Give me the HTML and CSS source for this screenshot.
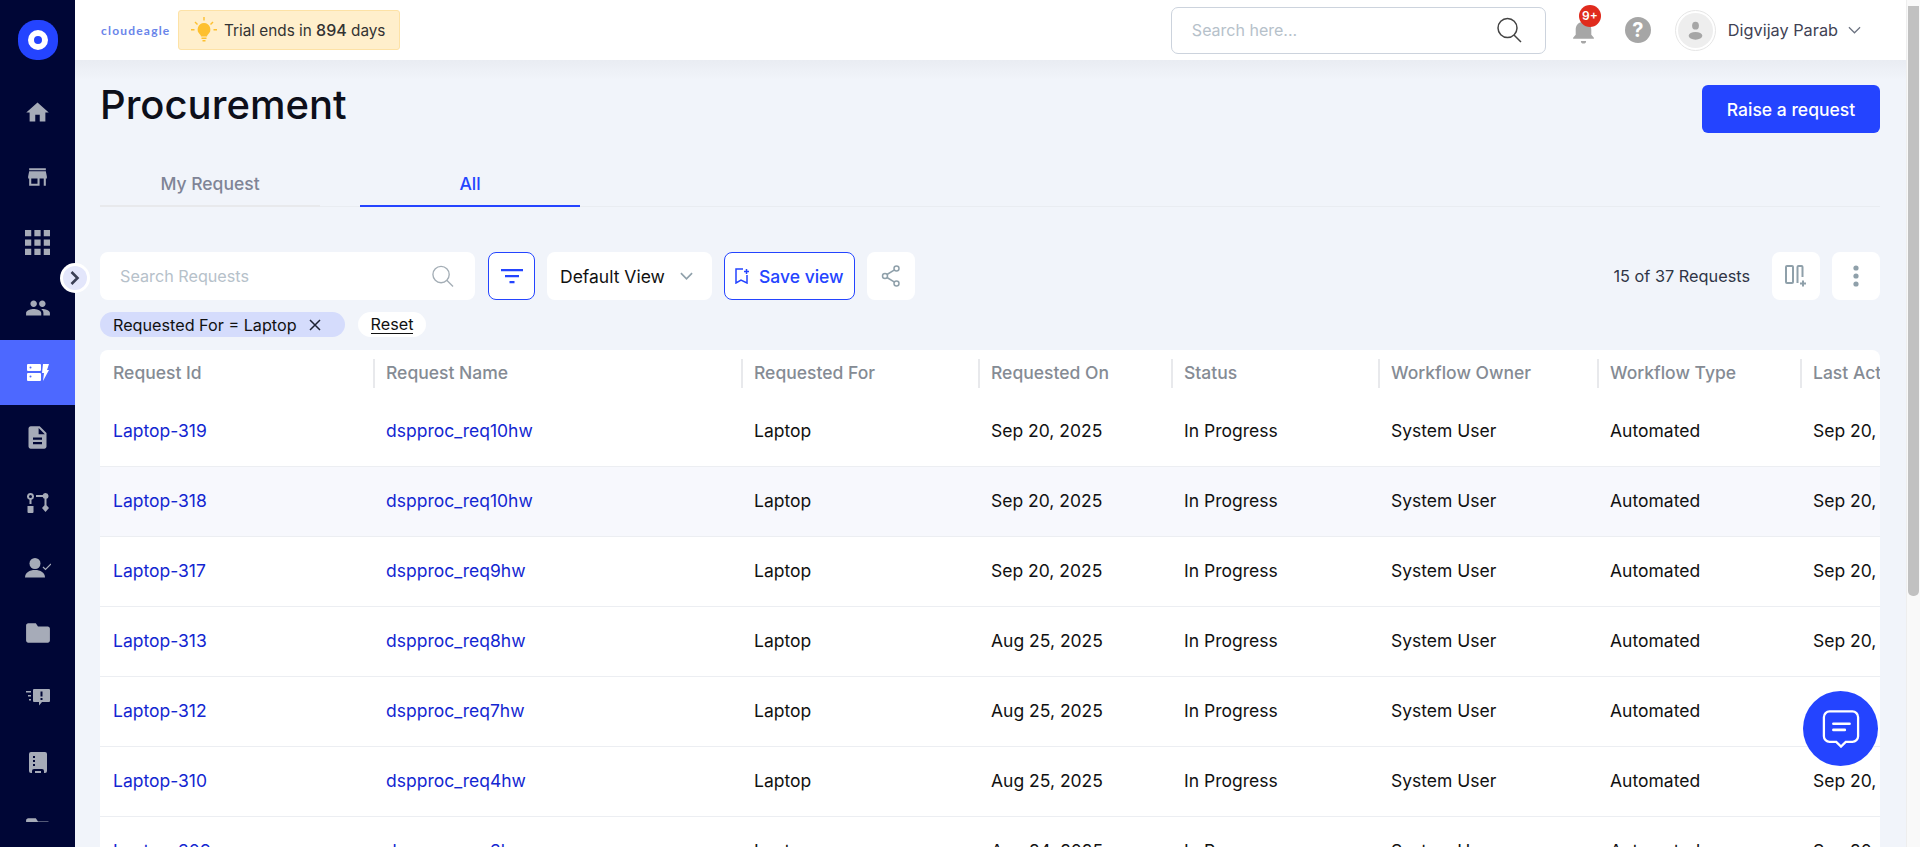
FILE: index.html
```html
<!DOCTYPE html>
<html>
<head>
<title>Procurement</title>
<meta charset="utf-8">
<link rel="stylesheet" href="styles.css">
</head>

<body>
<aside class="sidebar">
  <div class="brand"><span class="brand-dot"></span></div>
  <nav class="nav">
    <a class="nav-item"><svg viewBox="0 0 24 24" width="27" height="27"><path d="M10 20v-6h4v6h5v-8h3L12 3 2 12h3v8z"/></svg></a>
    <a class="nav-item"><svg viewBox="0 0 24 24" width="25" height="25"><path d="M20 3H4v2h16V3zm1 10v-2l-1-5H4l-1 5v2h1v7h10v-7h4v7h2v-7h1zm-9 5H6v-5h6v5z"/></svg></a>
    <a class="nav-item"><svg viewBox="0 0 24 24" width="25" height="25"><path d="M0 0h6v6H0zM9 0h6v6H9zM18 0h6v6h-6zM0 9h6v6H0zM9 9h6v6H9zM18 9h6v6h-6zM0 18h6v6H0zM9 18h6v6H9zM18 18h6v6h-6z"/></svg></a>
    <a class="nav-item"><svg viewBox="0 0 24 24" width="26" height="26"><path d="M16 11c1.660 0 2.990-1.340 2.990-3S17.660 5 16 5c-1.660 0-3 1.340-3 3s1.340 3 3 3zm-8 0c1.660 0 2.990-1.340 2.990-3S9.660 5 8 5C6.340 5 5 6.340 5 8s1.340 3 3 3zm0 2c-2.330 0-7 1.170-7 3.500V19h14v-2.500c0-2.330-4.670-3.500-7-3.500zm8 0c-.29 0-.62.02-.97.05 1.160.84 1.970 1.970 1.970 3.450V19h6v-2.500c0-2.330-4.670-3.500-7-3.500z"/></svg></a>
    <a class="nav-item active"><svg viewBox="0 0 22 17" width="22" height="17"><path fill-rule="evenodd" d="M1 0h12a1 1 0 0 1 1 1v5a1 1 0 0 1-1 1H1a1 1 0 0 1-1-1V1a1 1 0 0 1 1-1zm2.500 2.500a1 1 0 1 0 0 2 1 1 0 0 0 0-2zM1 9h12a1 1 0 0 1 1 1v6a1 1 0 0 1-1 1H1a1 1 0 0 1-1-1v-6a1 1 0 0 1 1-1zm2.500 2.500a1 1 0 1 0 0 2 1 1 0 0 0 0-2z"/><path d="M16 0h6l-2 6h2l-6 11 1-8h-2z"/></svg></a>
    <a class="nav-item"><svg viewBox="0 0 24 24" width="27" height="27"><path d="M14 2H6c-1.100 0-2 .9-2 2v16c0 1.100.9 2 2 2h12c1.100 0 2-.9 2-2V8l-6-6zm2 16H8v-2h8v2zm0-4H8v-2h8v2zm-3-5V3.500L18.500 9H13z"/></svg></a>
    <a class="nav-item"><svg viewBox="0 0 22 20" width="22" height="20"><path d="M3.500 0a3.500 3.500 0 0 1 1 6.850V11h-2V6.850A3.500 3.500 0 0 1 3.500 0zm0 2a1.500 1.500 0 1 0 0 3 1.500 1.500 0 0 0 0-3zM.5 13h6v6a1 1 0 0 1-1 1h-4a1 1 0 0 1-1-1zM18.500 0a3 3 0 1 1-2.800 4H9V2h6.700a3 3 0 0 1 2.800-2zM17.500 6h2v6.200l2.500 2.800-3.500 4-3.500-4 2.500-2.800z"/></svg></a>
    <a class="nav-item"><svg viewBox="0 0 26 20" width="26" height="20"><circle cx="10" cy="5.500" r="5.500"/><path d="M0 19.500c0-5 4.500-7.500 10-7.500s10 2.500 10 7.500z"/><path class="nav-line" d="M18 9l2.500 2.500L26 6"/></svg></a>
    <a class="nav-item"><svg viewBox="0 0 24 24" width="26" height="26"><path d="M10 3H3c-1.100 0-2 .9-2 2v14c0 1.100.9 2 2 2h18c1.100 0 2-.9 2-2V8c0-1.100-.9-2-2-2H12l-2-3z"/></svg></a>
    <a class="nav-item"><svg viewBox="0 0 24 17" width="24" height="17"><path fill-rule="evenodd" d="M8 0h15a1 1 0 0 1 1 1v11a1 1 0 0 1-1 1h-7l-3 3.500V13H8a1 1 0 0 1-1-1V1a1 1 0 0 1 1-1zm6.500 2.500v5h2v-5zm0 6.500v2h2V9z"/><path d="M0 2h5v1.500H0zM2 6h3v1.500H2zM3 10h2v1.500H3z"/></svg></a>
    <a class="nav-item"><svg viewBox="0 0 18 21" width="18" height="21"><path fill-rule="evenodd" d="M2 0h14a2 2 0 0 1 2 2v17a2 2 0 0 1-2 2h-1v-2a2 2 0 0 0-2-2H5a2 2 0 0 0-2 2v2H2a2 2 0 0 1-2-2V2a2 2 0 0 1 2-2zm2 4v2h2V4zm0 4v2h2V8zm0 4v2h2v-2zM6 19h6v2H6z"/></svg></a>
    <a class="nav-item"><svg viewBox="0 0 24 24" width="26" height="26"><path d="M10 3H3c-1.100 0-2 .9-2 2v14c0 1.100.9 2 2 2h18c1.100 0 2-.9 2-2V8c0-1.100-.9-2-2-2H12l-2-3z"/></svg></a>
  </nav>
</aside>

<button class="expand-btn"><span class="expand-inner"><svg viewBox="0 0 12 16" width="12" height="16"><path d="M2.500 2l6 6-6 6" fill="none" stroke="#3a3f55" stroke-width="2.600"/></svg></span></button>

<div class="main">
  <header class="topbar">
    <span class="logo">cloudeagle</span>
    <div class="trial">
      <svg viewBox="0 0 26 26" width="26" height="26"><path d="M13 6a6.500 6.500 0 0 1 4 11.500c-.7.600-1 1.200-1 2H10c0-.8-.3-1.400-1-2A6.500 6.500 0 0 1 13 6zM10.500 20.500h5v1.500h-5zM11.500 23h3v1.500h-3zM12.300 0h1.400v3.500h-1.400zM0 12h3.500v1.400H0zM22.500 12H26v1.400h-3.500zM4.500 4.500l2.500 2.500-1 1-2.500-2.500zM21.500 4.500l1 1-2.500 2.500-1-1z" fill="#fdc02f"/></svg>
      <span>Trial ends in <b>894</b> days</span>
    </div>
    <div class="top-search">
      <span class="top-search-text">Search here...</span>
      <svg viewBox="0 0 26 26" width="26" height="26"><circle cx="11.500" cy="11" r="9.500" fill="none" stroke="#444" stroke-width="1.500"/><path d="M18 18l7 7" stroke="#444" stroke-width="1.500"/></svg>
    </div>
    <div class="bell">
      <svg viewBox="0 0 24 26" width="25" height="27"><path d="M12 2a2 2 0 0 1 2 2v.7c3.500.9 5.500 3.800 5.500 7.300v5l2.500 3v1H2v-1l2.500-3v-5c0-3.500 2-6.400 5.500-7.300V4a2 2 0 0 1 2-2zM9.500 23h5a2.500 2.500 0 0 1-5 0z" fill="#a6a6a6"/></svg>
      <span class="badge">9+</span>
    </div>
    <span class="help">?</span>
    <span class="avatar"><svg viewBox="0 0 36 36" width="35" height="35"><circle cx="18" cy="18" r="18" fill="#eeeeee"/><ellipse cx="18" cy="13" rx="3.500" ry="4" fill="#a6a6a6"/><ellipse cx="18" cy="23.500" rx="7" ry="4" fill="#a6a6a6"/></svg></span>
    <span class="user-name">Digvijay Parab</span>
    <svg class="user-chev" viewBox="0 0 14 8" width="13" height="8"><path d="M1 1l6 6 6-6" fill="none" stroke="#6b7280" stroke-width="1.300"/></svg>
  </header>

  <div class="content">
    <div class="title-row">
      <h1>Procurement</h1>
      <button class="raise-btn">Raise a request</button>
    </div>

    <div class="tabs">
      <div class="tab">My Request</div>
      <div class="tab selected">All</div>
    </div>

    <div class="toolbar">
      <div class="req-search">
        <span>Search Requests</span>
        <svg viewBox="0 0 24 24" width="23" height="23"><circle cx="10.500" cy="10" r="8.500" fill="none" stroke="#a3adb5" stroke-width="1.400"/><path d="M16.500 16l6.500 6.500" stroke="#a3adb5" stroke-width="1.400"/></svg>
      </div>
      <button class="tool-btn outlined"><svg viewBox="0 0 22 16" width="22" height="16"><path d="M0 1h22v2.200H0zM4 7h14v2.200H4zM8.500 13h5v2.200h-5z" fill="#2444ff"/></svg></button>
      <div class="view-select">
        <span>Default View</span>
        <svg viewBox="0 0 14 8" width="13" height="8"><path d="M1 1l6 6 6-6" fill="none" stroke="#8fa0aa" stroke-width="1.800"/></svg>
      </div>
      <button class="save-btn">
        <svg viewBox="0 0 14 16" width="14" height="16"><path d="M8 1H1v14l5-3 6 3V7M9 3.500h5M11.500 1v5" fill="none" stroke="#2444ff" stroke-width="1.500"/></svg>
        Save view
      </button>
      <button class="tool-btn"><svg viewBox="0 0 20 22" width="20" height="22"><g fill="none" stroke="#8fa0aa" stroke-width="1.500"><circle cx="15.500" cy="3.500" r="2.500"/><circle cx="4" cy="11" r="2.500"/><circle cx="15.500" cy="18.500" r="2.500"/><path d="M6 9.500l7.500-4.700M6 12.500l7.500 4.700"/></g></svg></button>
      <span class="count">15 of 37 Requests</span>
      <button class="tool-btn"><svg viewBox="0 0 22 22" width="22" height="22"><g fill="none" stroke="#8fa0aa" stroke-width="2"><rect x="1" y="1" width="7" height="17" rx="1"/><path d="M12.500 18V2a1 1 0 0 1 1-1h3a1 1 0 0 1 1 1v10"/><path d="M15 18.500h6M18 15.500v6"/></g></svg></button>
      <button class="tool-btn"><svg viewBox="0 0 6 22" width="6" height="22"><circle cx="3" cy="3" r="2.600" fill="#8fa0aa"/><circle cx="3" cy="11" r="2.600" fill="#8fa0aa"/><circle cx="3" cy="19" r="2.600" fill="#8fa0aa"/></svg></button>
    </div>

    <div class="chips">
      <div class="chip">Requested For = Laptop <svg viewBox="0 0 12 12" width="12" height="12"><path d="M1 1l10 10M11 1L1 11" stroke="#1d2233" stroke-width="1.500"/></svg></div>
      <div class="reset"><span>Reset</span></div>
    </div>

    <div class="table-wrap">
      <table class="req-table">
        <colgroup>
          <col class="c-id"><col class="c-name"><col class="c-for"><col class="c-on">
          <col class="c-status"><col class="c-owner"><col class="c-type"><col class="c-last">
        </colgroup>
        <thead>
          <tr>
            <th><span>Request Id</span></th>
            <th><span>Request Name</span></th>
            <th><span>Requested For</span></th>
            <th><span>Requested On</span></th>
            <th><span>Status</span></th>
            <th><span>Workflow Owner</span></th>
            <th><span>Workflow Type</span></th>
            <th><span>Last Activity</span></th>
          </tr>
        </thead>
        <tbody>
          <tr>
            <td><a>Laptop-319</a></td><td><a>dspproc_req10hw</a></td><td>Laptop</td><td>Sep 20, 2025</td>
            <td>In Progress</td><td>System User</td><td>Automated</td><td>Sep 20, 2025</td>
          </tr>
          <tr class="hovered">
            <td><a>Laptop-318</a></td><td><a>dspproc_req10hw</a></td><td>Laptop</td><td>Sep 20, 2025</td>
            <td>In Progress</td><td>System User</td><td>Automated</td><td>Sep 20, 2025</td>
          </tr>
          <tr>
            <td><a>Laptop-317</a></td><td><a>dspproc_req9hw</a></td><td>Laptop</td><td>Sep 20, 2025</td>
            <td>In Progress</td><td>System User</td><td>Automated</td><td>Sep 20, 2025</td>
          </tr>
          <tr>
            <td><a>Laptop-313</a></td><td><a>dspproc_req8hw</a></td><td>Laptop</td><td>Aug 25, 2025</td>
            <td>In Progress</td><td>System User</td><td>Automated</td><td>Sep 20, 2025</td>
          </tr>
          <tr>
            <td><a>Laptop-312</a></td><td><a>dspproc_req7hw</a></td><td>Laptop</td><td>Aug 25, 2025</td>
            <td>In Progress</td><td>System User</td><td>Automated</td><td>Sep 20, 2025</td>
          </tr>
          <tr>
            <td><a>Laptop-310</a></td><td><a>dspproc_req4hw</a></td><td>Laptop</td><td>Aug 25, 2025</td>
            <td>In Progress</td><td>System User</td><td>Automated</td><td>Sep 20, 2025</td>
          </tr>
          <tr>
            <td><a>Laptop-309</a></td><td><a>dspproc_req3hw</a></td><td>Laptop</td><td>Aug 24, 2025</td>
            <td>In Progress</td><td>System User</td><td>Automated</td><td>Sep 20, 2025</td>
          </tr>
        </tbody>
      </table>
    </div>
  </div>
</div>

<div class="scroll-track"><div class="scroll-thumb"></div></div>

<button class="chat-btn"><svg viewBox="0 0 40 40" width="38" height="38"><path d="M8 1.500h24a6 6 0 0 1 6 6v20a6 6 0 0 1-6 6h-7l-5 5-5-5H8a6 6 0 0 1-6-6v-20a6 6 0 0 1 6-6z" fill="none" stroke="#fff" stroke-width="2.400"/><path d="M12 14.500h17M12 21h12" stroke="#fff" stroke-width="2.800" stroke-linecap="round"/></svg></button>
</body>
</html>
```

FILE: styles.css
```css
* {
  box-sizing: border-box;
}

html, body {
  height: 100%;
}

body {
  margin: 0;
  display: flex;
  overflow: hidden;
  font-family: Inter, "Liberation Sans", sans-serif;
  font-size: 16px;
  color: #111;
  background-color: #f1f4fa;
}

button {
  font-family: inherit;
  cursor: pointer;
}

/* sidebar */
.sidebar {
  width: 75px;
  flex: none;
  display: flex;
  flex-direction: column;
  padding: 20px 0 25px;
  background-color: #000636;
}

.brand {
  width: 40px;
  height: 40px;
  margin: 0 auto 20px;
  flex: none;
  display: flex;
  align-items: center;
  justify-content: center;
  border-radius: 46%;
  background-color: #2444ff;
}

.brand-dot {
  width: 20px;
  height: 20px;
  border: 6px solid #fff;
  border-radius: 50%;
}

.nav {
  flex: 1;
  overflow: hidden;
}

.nav-item {
  height: 65px;
  display: flex;
  align-items: center;
  justify-content: center;
}

.nav-item svg {
  fill: #a6abb8;
}

.nav-line {
  fill: none;
  stroke: #a6abb8;
  stroke-width: 1.200;
}

.nav-item.active {
  background-color: #4d68ff;
}

.nav-item.active svg {
  fill: #fff;
}

.expand-btn {
  position: absolute;
  left: 60px;
  top: 263px;
  width: 30px;
  height: 30px;
  padding: 0;
  border: none;
  border-radius: 50%;
  background: #fff;
  display: flex;
  align-items: center;
  justify-content: center;
  z-index: 5;
}

.expand-inner {
  width: 24px;
  height: 24px;
  border-radius: 50%;
  background-color: #e3e6fb;
  display: flex;
  align-items: center;
  justify-content: center;
}

/* top bar */
.main {
  flex: 1;
  min-width: 0;
  height: 100%;
  overflow: hidden;
  display: flex;
  flex-direction: column;
}

.topbar {
  height: 60px;
  flex: none;
  display: flex;
  align-items: center;
  padding: 0 45px 0 26px;
  background-color: #fff;
}

.logo {
  width: 77px;
  font-size: 12px;
  font-weight: 700;
  letter-spacing: 1.200px;
  color: #6a85ea;
  font-family: Lato, sans-serif;
}

.trial {
  width: 222px;
  height: 40px;
  display: flex;
  align-items: center;
  gap: 7px;
  padding-left: 12px;
  font-size: 15.300px;
  color: #333;
  background-color: #ffefcc;
  border: 1px solid #fde2a6;
  border-radius: 3px;
}

.trial b {
  font-weight: 500;
  font-size: 16px;
}

.top-search {
  width: 375px;
  height: 47px;
  margin-left: auto;
  display: flex;
  align-items: center;
  justify-content: space-between;
  padding: 0 23px 0 20px;
  background: #fff;
  border: 1px solid #ccd3dd;
  border-radius: 7px;
}

.top-search-text {
  color: #b6c1ca;
}

.bell {
  position: relative;
  width: 25px;
  height: 27px;
  margin-left: 25px;
}

.badge {
  position: absolute;
  left: 8px;
  top: -12px;
  width: 22px;
  height: 22px;
  border-radius: 50%;
  background-color: #e02b1d;
  color: #fff;
  font-size: 12px;
  font-weight: 600;
  line-height: 22px;
  text-align: center;
}

.help {
  width: 26px;
  height: 26px;
  margin-left: 29px;
  border-radius: 50%;
  background-color: #a6a6a6;
  color: #fff;
  font-size: 20px;
  font-weight: 700;
  line-height: 26px;
  text-align: center;
}

.avatar {
  width: 41px;
  height: 41px;
  margin-left: 24px;
  display: flex;
  align-items: center;
  justify-content: center;
  border: 1px solid #e6e6e6;
  border-radius: 50%;
}

.user-name {
  margin-left: 12px;
  font-size: 16.300px;
  color: #3f4254;
}

.user-chev {
  margin-left: 10px;
}

/* page content */
.content {
  flex: 1;
  padding: 20px 26px 0 25px;
  background: linear-gradient(#e9ecf2, #f1f4fa 20px);
}

.title-row {
  display: flex;
  justify-content: space-between;
}

h1 {
  margin: 1px 0 0;
  font-size: 40px;
  font-weight: 500;
  line-height: 48px;
  color: #0d0f1a;
}

.raise-btn {
  width: 178px;
  height: 48px;
  margin-top: 5px;
  padding-bottom: 1px;
  border: none;
  border-radius: 6px;
  background-color: #2444ff;
  color: #fff;
  font-size: 17.500px;
  font-weight: 500;
}

.tabs {
  display: flex;
  gap: 40px;
  margin-top: 26px;
  border-bottom: 1px solid #e9ecf1;
}

.tab {
  width: 220px;
  height: 48px;
  margin-bottom: -1px;
  padding-top: 14px;
  text-align: center;
  font-size: 17.500px;
  font-weight: 500;
  color: #7f8496;
  border-bottom: 2px solid #e8e9ec;
}

.tab.selected {
  color: #2444ff;
  border-bottom-color: #2444ff;
}

.toolbar {
  display: flex;
  align-items: center;
  gap: 12px;
  margin-top: 45px;
}

.req-search {
  width: 375px;
  height: 48px;
  margin-right: 1px;
  display: flex;
  align-items: center;
  justify-content: space-between;
  padding: 0 21px 0 20px;
  border-radius: 8px;
  background: #fff;
  font-size: 16.200px;
  color: #b6c1ca;
}

.tool-btn {
  width: 48px;
  height: 48px;
  flex: none;
  padding: 0;
  border: none;
  border-radius: 8px;
  background: #fff;
  display: flex;
  align-items: center;
  justify-content: center;
}

.tool-btn.outlined {
  width: 47px;
  border: 1px solid #2444ff;
}

.view-select {
  width: 165px;
  height: 48px;
  display: flex;
  align-items: center;
  justify-content: space-between;
  padding: 0 19px 0 13px;
  border-radius: 8px;
  background: #fff;
  font-size: 17.500px;
}

.save-btn {
  width: 131px;
  height: 48px;
  display: flex;
  align-items: center;
  gap: 10px;
  padding: 0 0 0 10px;
  border: 1px solid #2444ff;
  border-radius: 8px;
  background: #fff;
  color: #2444ff;
  font-size: 17.500px;
  font-weight: 500;
  white-space: nowrap;
}

.count {
  margin-left: auto;
  margin-right: 10px;
  font-size: 16.300px;
  color: #2f3446;
}

.chips {
  display: flex;
  gap: 13px;
  margin-top: 12px;
}

.chip {
  width: 245px;
  height: 25px;
  display: flex;
  align-items: center;
  gap: 12px;
  padding-left: 13px;
  border-radius: 13px;
  background-color: #d5dcfc;
  font-size: 16.200px;
  white-space: nowrap;
}

.reset {
  width: 68px;
  height: 25px;
  display: flex;
  align-items: center;
  justify-content: center;
  border-radius: 13px;
  background: #fff;
  font-size: 16.200px;
}

.reset span {
  line-height: 18px;
  border-bottom: 1px solid #111;
}

/* table */
.table-wrap {
  margin-top: 13px;
  overflow: hidden;
  border-radius: 8px 8px 0 0;
  background: #fff;
}

.req-table {
  width: 1900px;
  table-layout: fixed;
  border-collapse: collapse;
  font-size: 17.500px;
}

.c-id { width: 273px; }
.c-name { width: 368px; }
.c-for { width: 237px; }
.c-on { width: 193px; }
.c-status { width: 207px; }
.c-owner { width: 219px; }
.c-type { width: 203px; }

.req-table th {
  height: 46px;
  padding: 0;
  text-align: left;
  font-weight: 500;
  color: #858b94;
}

.req-table th span {
  display: block;
  height: 29px;
  padding-left: 11px;
  line-height: 28px;
  white-space: nowrap;
  border-left: 2px solid #e8e9ec;
}

.req-table th:first-child span {
  padding-left: 13px;
  border-left: none;
}

.req-table td {
  height: 70px;
  padding: 0 0 1px 13px;
  white-space: nowrap;
  border-bottom: 1px solid #eceef2;
}

.req-table td a {
  color: #1326d1;
}

.hovered td {
  background-color: #f7f8fd;
}

/* page scrollbar */
.scroll-track {
  width: 14px;
  flex: none;
  padding-left: 1px;
  background-color: #f9f9f9;
  border-left: 1px solid #eeeeee;
}

.scroll-thumb {
  width: 11px;
  height: 590px;
  margin-top: 6px;
  border-radius: 0 0 5px 5px;
  background-color: #c1c1c1;
}

.chat-btn {
  position: fixed;
  left: 1803px;
  top: 691px;
  width: 75px;
  height: 75px;
  padding: 0;
  border: none;
  border-radius: 50%;
  background-color: #2444ff;
  display: flex;
  align-items: center;
  justify-content: center;
  z-index: 10;
}
```
